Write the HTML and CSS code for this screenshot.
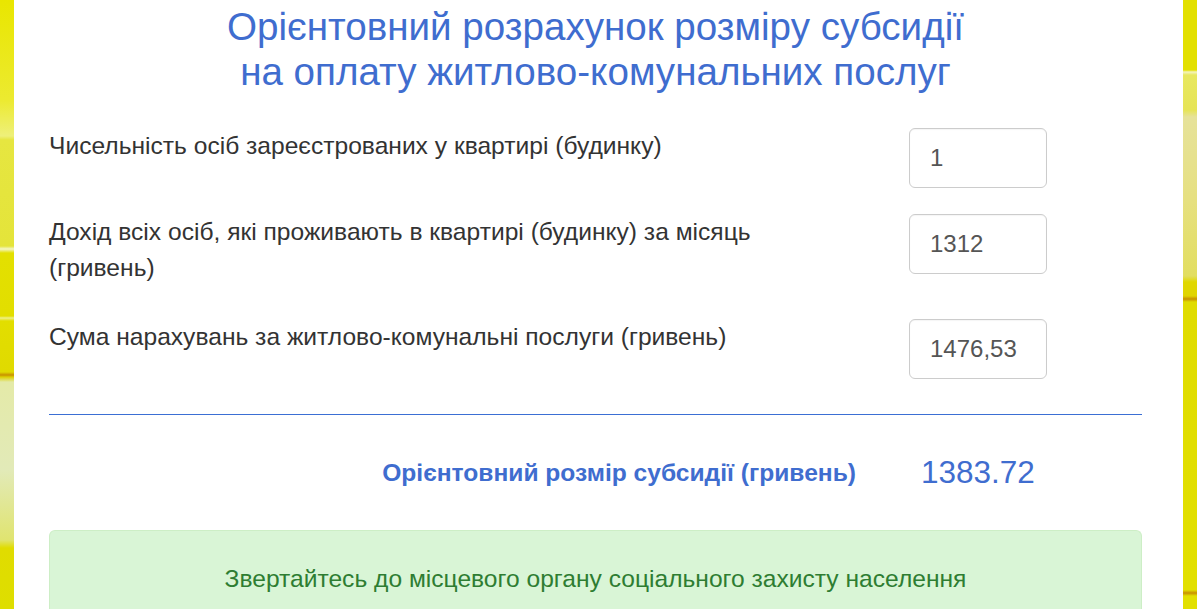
FILE: index.html
```html
<!DOCTYPE html>
<html lang="uk">
<head>
<meta charset="utf-8">
<title>Розрахунок субсидії</title>
<link rel="stylesheet" href="styles.css">
</head>
<body>
<main class="panel">
  <h1 class="title">Орієнтовний розрахунок розміру субсидії<br>на оплату житлово-комунальних послуг</h1>
  <div class="row">
    <label class="label" for="persons">Чисельність осіб зареєстрованих у квартирі (будинку)</label>
    <input class="field" id="persons" type="text" value="1">
  </div>
  <div class="row">
    <label class="label" for="income">Дохід всіх осіб, які проживають в квартирі (будинку) за місяць (гривень)</label>
    <input class="field" id="income" type="text" value="1312">
  </div>
  <div class="row">
    <label class="label" for="charges">Сума нарахувань за житлово-комунальні послуги (гривень)</label>
    <input class="field" id="charges" type="text" value="1476,53">
  </div>
  <hr class="divider">
  <div class="result">
    <div class="result-label">Орієнтовний розмір субсидії (гривень)</div>
    <div class="result-value">1383.72</div>
  </div>
  <div class="alert">Звертайтесь до місцевого органу соціального захисту населення</div>
</main>
</body>
</html>
```
FILE: styles.css
```css
html, body {
  margin: 0;
  height: 100%;
}
body {
  font-family: "Liberation Sans", Arial, sans-serif;
  background:
    linear-gradient(180deg,
      #e9e600 0px, #ecea30 100px, #eef07a 136px, #e6e640 140px,
      #e4e43a 246px, #f4f6c8 249px, #e3e000 253px,
      #e2de00 316px, #eef08a 318px, #e2de00 321px,
      #e0da00 372px, #c89000 375px, #dcd000 377px,
      #e4eaa8 382px, #e2eab8 470px, #e0e470 540px, #e0dc00 548px, #dede00 609px)
      left top / 14px 100% no-repeat,
    linear-gradient(180deg,
      #e3e000 0px, #e3e000 70px, #f4f4c0 72px, #e8e860 75px,
      #e6e456 110px, #e6e29a 117px, #e6e080 200px, #e2de60 276px,
      #e0d800 282px, #e0d400 296px, #c89000 299px, #e0dc00 302px,
      #e2e000 590px, #c89000 593px, #e2e000 596px, #e2e000 609px)
      right top / 14px 100% no-repeat,
    #e2e000;
  color: #333;
}
.panel {
  margin: 0 14px;
  min-height: 100%;
  background: #fff;
  padding: 0 41px 0 35px;
  box-sizing: border-box;
}
.title {
  margin: 0 0 34px;
  padding-top: 4px;
  text-align: center;
  font-weight: normal;
  font-size: 38.6px;
  line-height: 45px;
  color: #3f6dcf;
}
.row {
  display: grid;
  grid-template-columns: 860px 138px;
  align-items: start;
  margin-bottom: 26px;
}
.label {
  max-width: 760px;
  font-size: 24.6px;
  line-height: 36px;
  padding-bottom: 7px;
  color: #333;
}
.field {
  width: 138px;
  height: 60px;
  box-sizing: border-box;
  border: 1px solid #ccc;
  border-radius: 6px;
  padding: 0 0 0 20px;
  font-family: "Liberation Sans", Arial, sans-serif;
  font-size: 24px;
  color: #555;
  background: #fff;
  box-shadow: inset 0 1px 1px rgba(0,0,0,0.04);
}
.divider {
  margin: 35px 0 0;
  height: 0;
  border: 0;
  border-top: 1px solid #3b6fd4;
}
.result {
  display: grid;
  grid-template-columns: 860px 138px;
  align-items: center;
  height: 115px;
}
.result-label {
  text-align: right;
  padding-right: 53px;
  font-weight: bold;
  font-size: 24.6px;
  color: #3f6dcf;
}
.result-value {
  padding-left: 12px;
  font-size: 31.5px;
  color: #3f6dcf;
}
.alert {
  background: #d9f5d6;
  border: 1px solid #cdeec6;
  border-bottom: 0;
  border-radius: 6px 6px 0 0;
  padding: 34px 15px 40px;
  text-align: center;
  font-size: 24.6px;
  color: #2e7d32;
}
```
